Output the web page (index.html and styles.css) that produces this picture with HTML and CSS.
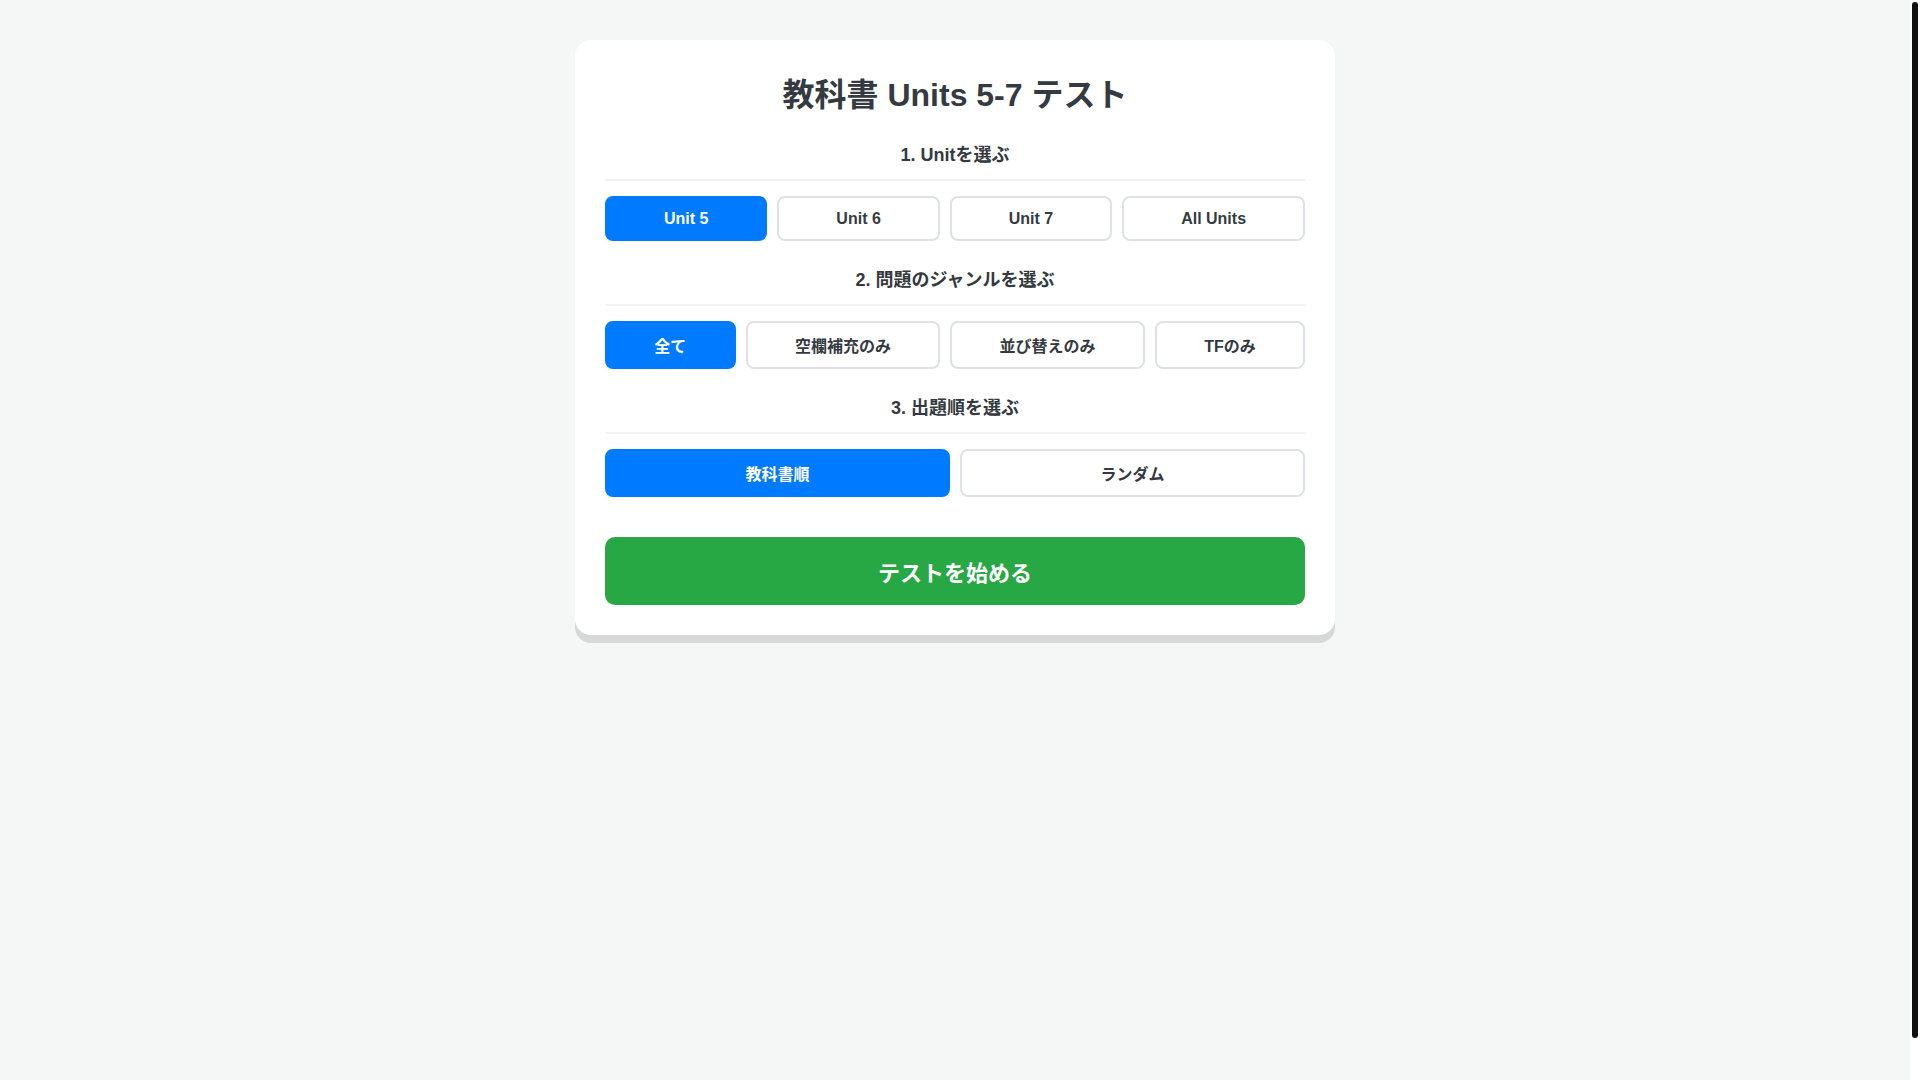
FILE: index.html
```html
<!DOCTYPE html>
<html lang="ja">
<head>
<meta charset="utf-8">
<title>教科書 Units 5-7 テスト</title>
<link rel="stylesheet" href="styles.css">
</head>
<body>
<div class="card">
  <h1 class="title">教科書 Units 5-7 テスト</h1>

  <div class="section">
    <h3 class="section-title">1. Unitを選ぶ</h3>
    <div class="options">
      <button class="opt active">Unit 5</button>
      <button class="opt">Unit 6</button>
      <button class="opt">Unit 7</button>
      <button class="opt">All Units</button>
    </div>
  </div>

  <div class="section">
    <h3 class="section-title">2. 問題のジャンルを選ぶ</h3>
    <div class="options options-jp">
      <button class="opt active">全て</button>
      <button class="opt">空欄補充のみ</button>
      <button class="opt">並び替えのみ</button>
      <button class="opt">TFのみ</button>
    </div>
  </div>

  <div class="section">
    <h3 class="section-title">3. 出題順を選ぶ</h3>
    <div class="options options-jp">
      <button class="opt active">教科書順</button>
      <button class="opt">ランダム</button>
    </div>
  </div>

  <button class="start">テストを始める</button>
</div>

<div class="scrollbar"><div class="scrollbar-thumb"></div></div>
</body>
</html>
```

FILE: styles.css
```css
html {
  background: #f4f7f6;
}

body {
  margin: 0;
  padding: 20px 30px 20px 20px;
  background: #f4f7f6;
  font-family: "Liberation Sans", Arial, "Noto Sans CJK JP", sans-serif;
  color: #343a40;
}

.card {
  max-width: 700px;
  margin: 20px auto 0;
  padding: 29px 30px 30px;
  background: #ffffff;
  border-radius: 16px;
  box-shadow: 0 8px 0 rgba(0, 0, 0, 0.12);
}

.title {
  margin: 0 0 25px;
  font-size: 32px;
  font-weight: bold;
  text-align: center;
  color: #343a40;
}

.section {
  margin-bottom: 24px;
}

.section-title {
  margin: 0 0 15px;
  padding-bottom: 13px;
  border-bottom: 2px solid #f1f2f3;
  font-size: 18px;
  font-weight: bold;
  text-align: center;
  color: #343a40;
}

.options {
  display: flex;
  gap: 10px;
}

.opt {
  flex: 1 1 auto;
  padding: 11.5px 10px;
  border: 2px solid #dee2e6;
  border-radius: 8px;
  background: #ffffff;
  color: #343a40;
  font-family: inherit;
  font-size: 16px;
  font-weight: bold;
  cursor: pointer;
}

.options-jp .opt {
  padding-top: 10px;
  padding-bottom: 10px;
}

.opt.active {
  background: #007bff;
  border-color: #007bff;
  color: #ffffff;
}

.start {
  display: block;
  width: 100%;
  margin-top: 40px;
  padding: 18px;
  border: none;
  border-radius: 10px;
  background: #28a745;
  color: #ffffff;
  font-family: inherit;
  font-size: 22px;
  font-weight: bold;
  cursor: pointer;
}

.scrollbar {
  position: fixed;
  top: 0;
  right: 0;
  width: 10px;
  height: 100vh;
  background: #ffffff;
}

.scrollbar-thumb {
  position: absolute;
  top: 2px;
  left: 2px;
  width: 6px;
  height: 1036px;
  border-radius: 3px;
  background: #111111;
}
```
